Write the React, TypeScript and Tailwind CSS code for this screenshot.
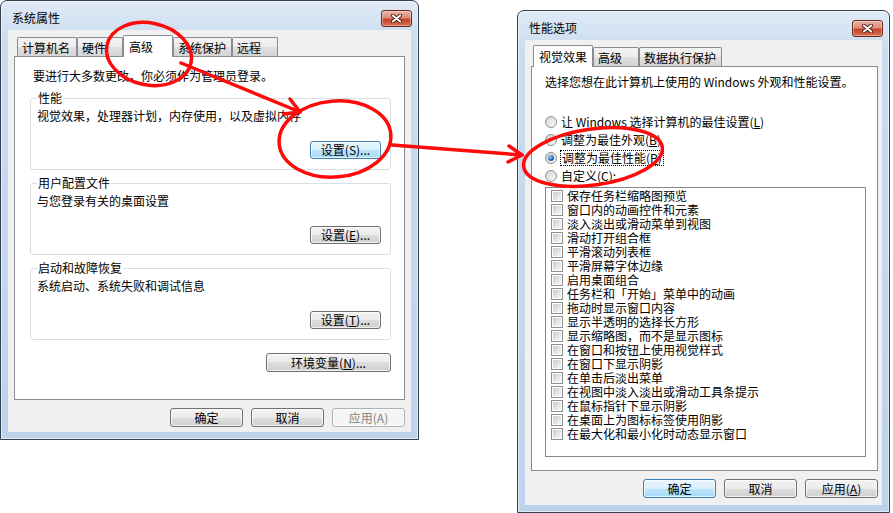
import React from "react";

type BtnKind = "normal" | "focus" | "disabled";

const btnKinds: Record<BtnKind, string> = {
  normal:
    "border-[#707070] bg-[linear-gradient(to_bottom,#f2f2f2_0%,#ebebeb_50%,#dddddd_50%,#cfcfcf_100%)] text-black",
  focus:
    "border-[#3c7fb1] bg-[linear-gradient(to_bottom,#eaf6fd_0%,#d9f0fc_50%,#bee6fd_50%,#a7d9f5_100%)] text-black",
  disabled: "border-[#adb2b5] bg-[#f4f4f4] text-[#838383]",
};

function Btn({
  children,
  kind = "normal",
  className = "",
}: {
  children: React.ReactNode;
  kind?: BtnKind;
  className?: string;
}) {
  return (
    <button
      type="button"
      className={`flex items-center justify-center rounded-[3px] border text-[12px] leading-[14px] shadow-[inset_0_0_0_1px_rgba(255,255,255,0.7)] ${btnKinds[kind]} ${className}`}
    >
      {children}
    </button>
  );
}

// mnemonic letter
function M({ children }: { children: React.ReactNode }) {
  return <span className="underline underline-offset-[1px]">{children}</span>;
}

function CloseButton() {
  return (
    <div className="mt-[9px] flex h-[17px] w-[31px] items-center justify-center rounded-[3px] border border-[#6b2a1f] bg-[linear-gradient(to_bottom,#ecb4a6_0%,#dd8d77_45%,#c5432a_55%,#d66e52_100%)] shadow-[inset_0_0_0_1px_rgba(255,255,255,0.35)]">
      <svg width="11" height="9" viewBox="0 0 11 9">
        <path d="M1.8 1.5 L9.2 7.5 M9.2 1.5 L1.8 7.5" stroke="#4a1a10" strokeWidth="3.6" strokeLinecap="round" />
        <path d="M1.8 1.5 L9.2 7.5 M9.2 1.5 L1.8 7.5" stroke="#ffffff" strokeWidth="2" strokeLinecap="round" />
      </svg>
    </div>
  );
}

function Tab({ label, active = false, className = "" }: { label: string; active?: boolean; className?: string }) {
  if (active) {
    return (
      <div
        className={`relative z-10 -mb-px h-[22px] rounded-t-[2px] border border-b-0 border-[#898c95] bg-white pl-[5px] pt-[4px] text-[12px] leading-[14px] ${className}`}
      >
        {label}
      </div>
    );
  }
  return (
    <div
      className={`h-[19px] rounded-t-[2px] border border-b-0 border-[#898c95] bg-[linear-gradient(to_bottom,#f4f4f4_0%,#ececec_50%,#e0e0e0_50%,#d4d4d4_100%)] pl-[4px] pt-[3px] text-[12px] leading-[14px] ${className}`}
    >
      {label}
    </div>
  );
}

function Window({
  title,
  className,
  children,
}: {
  title: string;
  className: string;
  children: React.ReactNode;
}) {
  return (
    <div
      className={`absolute flex flex-col rounded-t-[7px] border border-[#34404e] bg-[linear-gradient(to_bottom,#dfeaf6_0px,#cbdcef_40px,#bdd3eb_100%)] shadow-[inset_0_0_0_1px_rgba(255,255,255,0.55)] ${className}`}
    >
      <div className="flex h-[29px] justify-between pl-[11px] pr-[6px]">
        <span className="pt-[10px] text-[12px] leading-[14px] text-black">{title}</span>
        <CloseButton />
      </div>
      <div className="mx-[7px] mb-[7px] flex flex-1 flex-col bg-[#f0f0f0] pt-[5px]">{children}</div>
    </div>
  );
}

function Group({ title, text, button }: { title: string; text: string; button: React.ReactNode }) {
  return (
    <fieldset className="rounded-[3px] border border-[#d5dfe5] pb-[10px] pl-[6px] pr-[9px]">
      <legend className="px-[1px] text-[12px] leading-[14px]">{title}</legend>
      <p className="mt-[4px] text-[12px] leading-[14px]">{text}</p>
      <div className="mt-[18px] flex justify-end">{button}</div>
    </fieldset>
  );
}

function Radio({ checked = false }: { checked?: boolean }) {
  return (
    <span className="flex h-[12px] w-[12px] items-center justify-center rounded-full border border-[#8e8f8f] bg-[linear-gradient(135deg,#d2d4d6_0%,#f9f9f9_100%)]">
      {checked && (
        <span className="h-[6px] w-[6px] rounded-full bg-[radial-gradient(circle_at_35%_35%,#9fd8ff_0%,#2a6fbd_50%,#0d3e72_100%)]" />
      )}
    </span>
  );
}

function Check() {
  return (
    <span className="flex h-[12px] w-[12px] border border-[#8e8f8f] bg-white p-[1px]">
      <span className="h-full w-full bg-[linear-gradient(135deg,#c9cdd3_0%,#f6f6f6_100%)]" />
    </span>
  );
}

const effects = [
  "保存任务栏缩略图预览",
  "窗口内的动画控件和元素",
  "淡入淡出或滑动菜单到视图",
  "滑动打开组合框",
  "平滑滚动列表框",
  "平滑屏幕字体边缘",
  "启用桌面组合",
  "任务栏和「开始」菜单中的动画",
  "拖动时显示窗口内容",
  "显示半透明的选择长方形",
  "显示缩略图，而不是显示图标",
  "在窗口和按钮上使用视觉样式",
  "在窗口下显示阴影",
  "在单击后淡出菜单",
  "在视图中淡入淡出或滑动工具条提示",
  "在鼠标指针下显示阴影",
  "在桌面上为图标标签使用阴影",
  "在最大化和最小化时动态显示窗口",
];

export default function App() {
  return (
    <div className="relative h-[513px] w-[893px] overflow-hidden bg-white font-['Noto_Sans_CJK_SC','Noto_Sans',sans-serif] text-black">
      {/* 系统属性 */}
      <Window title="系统属性" className="left-0 top-0 h-[440px] w-[419px]">
        <div className="mx-[6px] flex flex-col">
          <div className="flex h-[21px] items-end pl-[3px]">
            <Tab label="计算机名" className="w-[60px]" />
            <Tab label="硬件" className="w-[46px]" />
            <Tab label="高级" active className="w-[50px]" />
            <Tab label="系统保护" className="w-[59px]" />
            <Tab label="远程" className="w-[46px]" />
          </div>
          <div className="flex h-[344px] flex-col border border-[#898c95] bg-white pl-[15px] pr-[13px] pt-[12px]">
            <p className="ml-[3px] text-[12px] leading-[14px]">要进行大多数更改，你必须作为管理员登录。</p>
            <div className="mt-[8px]">
              <Group
                title="性能"
                text="视觉效果，处理器计划，内存使用，以及虚拟内存"
                button={
                  <Btn kind="focus" className="h-[18px] w-[71px]">
                    设置(S)...
                  </Btn>
                }
              />
            </div>
            <div className="mt-[6px]">
              <Group
                title="用户配置文件"
                text="与您登录有关的桌面设置"
                button={
                  <Btn className="h-[18px] w-[71px]">
                    设置(<M>E</M>)...
                  </Btn>
                }
              />
            </div>
            <div className="mt-[6px]">
              <Group
                title="启动和故障恢复"
                text="系统启动、系统失败和调试信息"
                button={
                  <Btn className="h-[18px] w-[71px]">
                    设置(<M>T</M>)...
                  </Btn>
                }
              />
            </div>
            <div className="mt-[13px] flex justify-end">
              <Btn className="h-[19px] w-[125px]">
                环境变量(<M>N</M>)...
              </Btn>
            </div>
          </div>
        </div>
        <div className="mx-[6px] mt-[8px] flex justify-end gap-[8px]">
          <Btn className="h-[19px] w-[73px]">确定</Btn>
          <Btn className="h-[19px] w-[73px]">取消</Btn>
          <Btn kind="disabled" className="h-[19px] w-[73px]">
            应用(A)
          </Btn>
        </div>
      </Window>

      {/* 性能选项 */}
      <Window title="性能选项" className="left-[517px] top-[10px] h-[503px] w-[373px]">
        <div className="ml-[6px] mr-[4px] flex flex-col">
          <div className="flex h-[21px] items-end pl-[2px]">
            <Tab label="视觉效果" active className="w-[60px]" />
            <Tab label="高级" className="w-[46px]" />
            <Tab label="数据执行保护" className="w-[83px]" />
          </div>
          <div className="flex h-[405px] flex-col border border-[#898c95] bg-white pl-[13px] pt-[8px]">
            <p className="text-[12px] leading-[14px]">选择您想在此计算机上使用的 Windows 外观和性能设置。</p>
            <div className="mt-[24px] flex flex-col">
              <div className="flex h-[18px] items-center gap-[4px] text-[12px] leading-[14px]">
                <Radio />
                <span>
                  让 Windows 选择计算机的最佳设置(<M>L</M>)
                </span>
              </div>
              <div className="flex h-[18px] items-center gap-[4px] text-[12px] leading-[14px]">
                <Radio />
                <span>
                  调整为最佳外观(<M>B</M>)
                </span>
              </div>
              <div className="flex h-[18px] items-center gap-[3px] text-[12px] leading-[14px]">
                <Radio checked />
                <span className="border border-dotted border-black px-[1px]">
                  调整为最佳性能(<M>P</M>)
                </span>
              </div>
              <div className="flex h-[18px] items-center gap-[4px] text-[12px] leading-[14px]">
                <Radio />
                <span>
                  自定义(<M>C</M>):
                </span>
              </div>
            </div>
            <div className="mt-[2px] flex h-[270px] w-[321px] flex-col border border-[#828790] bg-white pt-[1px]">
              {effects.map((e) => (
                <div key={e} className="flex h-[14px] items-center gap-[4px] pl-[5px] text-[12px] leading-[14px]">
                  <Check />
                  <span>{e}</span>
                </div>
              ))}
            </div>
          </div>
        </div>
        <div className="ml-[6px] mr-[4px] mt-[8px] flex justify-end gap-[8px]">
          <Btn kind="focus" className="h-[19px] w-[73px]">
            确定
          </Btn>
          <Btn className="h-[19px] w-[73px]">取消</Btn>
          <Btn className="h-[19px] w-[73px]">
            应用(<M>A</M>)
          </Btn>
        </div>
      </Window>

      {/* red annotations */}
      <svg
        className="pointer-events-none absolute inset-0"
        width="893"
        height="513"
        viewBox="0 0 893 513"
        fill="none"
        stroke="#ff0a0a"
        strokeWidth="3.5"
        strokeLinecap="round"
        strokeLinejoin="round"
      >
        <ellipse cx="149" cy="54" rx="43" ry="31" transform="rotate(12 149 54)" />
        <path d="M181 63 L300 112" />
        <path d="M290 99 L300 112 L284 114" />
        <ellipse cx="335" cy="139" rx="56" ry="38" transform="rotate(-5 335 139)" />
        <path d="M392 145 L522 155" />
        <path d="M509 146 L522 155 L508 162" />
        <ellipse cx="593" cy="157" rx="70" ry="28" transform="rotate(-8 593 157)" />
      </svg>
    </div>
  );
}
